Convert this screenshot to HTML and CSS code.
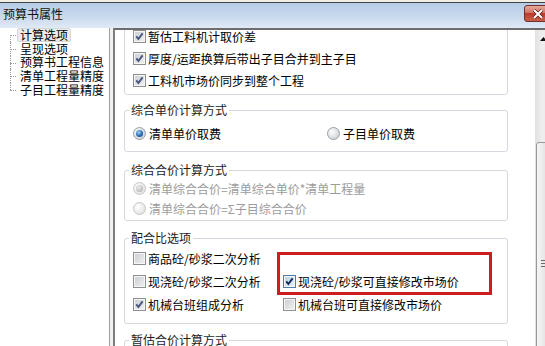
FILE: index.html
```html
<!DOCTYPE html>
<html lang="zh-CN">
<head>
    <meta charset="UTF-8">
    <title>预算书属性</title>
    <link rel="stylesheet" href="styles.css">
</head>
<body>
<div class="window">
    <div class="topstrip"></div>
    <div class="titlebar">
        <span class="title">预算书属性</span>
        <span class="close-btn">
            <svg width="12" height="10" viewBox="0 0 12 10"><path d="M2 1 L10 9 M10 1 L2 9" stroke="#5a1e18" stroke-width="3.4"/><path d="M2 1 L10 9 M10 1 L2 9" stroke="#fff" stroke-width="2"/></svg>
        </span>
    </div>

    <div class="main">
        <ul class="tree">
            <li class="first"><span class="label selected">计算选项</span></li>
            <li><span class="label">呈现选项</span></li>
            <li><span class="label">预算书工程信息</span></li>
            <li><span class="label">清单工程量精度</span></li>
            <li class="last"><span class="label">子目工程量精度</span></li>
        </ul>
        <div class="splitter"></div>

        <div class="content">
            <div class="pane">
                <!-- scrolled: top of this group is out of view -->
                <fieldset class="group g-top">
                    <div class="opt"><span class="cb"><svg viewBox="0 0 11 11"><path d="M2.3 5.4 L4.4 8 L8.6 2.4"/></svg></span>暂估工料机计取价差</div>
                    <div class="opt"><span class="cb"><svg viewBox="0 0 11 11"><path d="M2.3 5.4 L4.4 8 L8.6 2.4"/></svg></span>厚度/运距换算后带出子目合并到主子目</div>
                    <div class="opt"><span class="cb"><svg viewBox="0 0 11 11"><path d="M2.3 5.4 L4.4 8 L8.6 2.4"/></svg></span>工料机市场价同步到整个工程</div>
                </fieldset>

                <fieldset class="group g-unit">
                    <legend>综合单价计算方式</legend>
                    <div class="grid2">
                        <div class="opt"><span class="rb on"></span>清单单价取费</div>
                        <div class="opt"><span class="rb"></span>子目单价取费</div>
                    </div>
                </fieldset>

                <fieldset class="group g-total">
                    <legend>综合合价计算方式</legend>
                    <div class="opt"><span class="rb dis on"></span>清单综合合价=清单综合单价*清单工程量</div>
                    <div class="opt"><span class="rb dis"></span>清单综合合价=Σ子目综合合价</div>
                </fieldset>

                <fieldset class="group g-mix">
                    <legend>配合比选项</legend>
                    <div class="mix-grid">
                        <div class="opt"><span class="cb"></span>商品砼/砂浆二次分析</div>
                        <div class="opt"></div>
                        <div class="opt"><span class="cb"></span>现浇砼/砂浆二次分析</div>
                        <div class="opt"><span class="cb focus"><svg viewBox="0 0 11 11"><path d="M2.3 5.4 L4.4 8 L8.6 2.4"/></svg></span>现浇砼/砂浆可直接修改市场价</div>
                        <div class="opt"><span class="cb"><svg viewBox="0 0 11 11"><path d="M2.3 5.4 L4.4 8 L8.6 2.4"/></svg></span>机械台班组成分析</div>
                        <div class="opt"><span class="cb"></span>机械台班可直接修改市场价</div>
                        <div class="mark"></div>
                    </div>
                </fieldset>

                <fieldset class="group g-temp">
                    <legend>暂估合价计算方式</legend>
                </fieldset>
            </div>

            <div class="scrollbar">
                <div class="sb-up"><svg width="7" height="4" viewBox="0 0 7 4"><path d="M0 4 L3.5 0 L7 4 Z" fill="#111"/></svg></div>
                <div class="sb-track"></div>
                <div class="sb-thumb"><svg width="7" height="7" viewBox="0 0 7 7"><path d="M0 0.5 H7 M0 3.5 H7 M0 6.5 H7" stroke="#6a6a6a"/></svg></div>
            </div>
        </div>
    </div>
</div>
</body>
</html>
```

FILE: styles.css
```css
body {
    margin: 0;
    width: 545px;
    height: 346px;
    overflow: hidden;
    background: #f0f0f0;
    font-family: "Noto Sans CJK SC", "Noto Sans", sans-serif;
    font-size: 12px;
    color: #000;
}

.window {
    width: 552px;
    height: 346px;
    display: flex;
    flex-direction: column;
}

.topstrip {
    height: 2px;
    flex: none;
    background: #efede6;
    border-bottom: 1px solid #444;
}

.titlebar {
    height: 25px;
    flex: none;
    display: flex;
    justify-content: space-between;
    align-items: flex-start;
    padding-left: 3px;
    box-sizing: border-box;
    background: linear-gradient(#b5cce7, #cbdbee 60%, #e1eaf6);
}

.title {
    line-height: 14px;
    padding-top: 4px;
    color: #111;
}

.close-btn {
    width: 27px;
    height: 17px;
    margin: 2px 1px 0 0;
    box-sizing: border-box;
    border: 1px solid #70302a;
    border-radius: 3px;
    background: linear-gradient(#e6a99b, #d27466 45%, #bb3a2c 50%, #c9604a);
    display: flex;
    align-items: center;
    justify-content: center;
}

.main {
    flex: 1;
    display: flex;
    min-height: 0;
}

/* left tree */
.tree {
    width: 109px;
    margin: 0;
    padding: 0;
    list-style: none;
    background: #fff;
    border-right: 1px solid #a0a0a0;
}

.tree li {
    position: relative;
    height: 13.75px;
    display: flex;
    align-items: center;
    padding-left: 17px;
}

.tree li::before {
    content: "";
    position: absolute;
    left: 10px;
    top: 7px;
    width: 6px;
    border-top: 1px dotted #9a9a9a;
}

.tree li::after {
    content: "";
    position: absolute;
    left: 10px;
    top: 0;
    bottom: 0;
    border-left: 1px dotted #9a9a9a;
}

.tree li.first::after {
    top: 7px;
}

.tree li.last::after {
    bottom: auto;
    height: 7px;
}

.label {
    display: inline-block;
    line-height: 12px;
    padding: 0 2px;
    border: 1px solid transparent;
    white-space: nowrap;
}

.label.selected {
    background: #ececec;
    border-color: #d6d6d6;
    border-radius: 2px;
}

.splitter {
    width: 3px;
    flex: none;
    background: #f0f0f0;
}

/* right side */
.content {
    flex: 1;
    min-width: 0;
    display: flex;
    background: #fff;
    border-top: 2px solid #6d6d6d;
    border-left: 2px solid #7e7e7e;
}

.pane {
    flex: 1;
    overflow: hidden;
    padding-left: 9px;
}

.group {
    width: 384px;
    min-width: 0;
    box-sizing: border-box;
    margin: 0;
    padding: 0 8px 7px;
    border: 1px solid #d3d9de;
    border-radius: 3px;
}

.group legend {
    padding: 0 2px;
    margin-left: -4px;
    line-height: 14px;
    color: #1c1c1c;
}

.g-top {
    margin-top: -6px;
    padding-bottom: 3px;
}

.g-unit {
    margin-top: 8px;
    padding: 5px 8px 7px;
}

.g-total {
    margin-top: 11px;
    padding: 1px 8px 2px;
}

.g-mix {
    margin-top: 10px;
    padding: 2px 8px 7px;
}

.g-temp {
    margin-top: 9px;
    height: 40px;
}

.opt {
    display: flex;
    align-items: center;
    gap: 2px;
    height: 22px;
    white-space: nowrap;
}

.g-total .opt {
    height: 20px;
    color: #9c9c9c;
}

.g-mix .opt {
    height: 23px;
}

.grid2 {
    display: grid;
    grid-template-columns: 194px auto;
}

.mix-grid {
    position: relative;
    display: grid;
    grid-template-columns: 150px auto;
}

.mark {
    position: absolute;
    left: 144px;
    top: 5px;
    width: 215px;
    height: 43px;
    box-sizing: border-box;
    border: 3px solid #cc1d23;
}

/* checkbox */
.cb {
    width: 13px;
    height: 13px;
    flex: none;
    box-sizing: border-box;
    border: 1px solid #8e8f8f;
    background: linear-gradient(135deg, #c8ccd1, #f2f2f2);
    box-shadow: inset 0 0 0 1px #f6f6f6;
    display: flex;
}

.cb svg {
    width: 11px;
    height: 11px;
}

.cb path {
    fill: none;
    stroke: #46557c;
    stroke-width: 1.9;
}

.cb.focus {
    border-color: #4b7eae;
    background: linear-gradient(135deg, #b7cfe6, #eef4fa);
}

.cb.focus path {
    stroke: #14275e;
}

/* radio */
.rb {
    width: 13px;
    height: 13px;
    flex: none;
    box-sizing: border-box;
    border-radius: 50%;
    border: 1px solid #98a0a8;
    background: radial-gradient(circle at 35% 35%, #fdfdfd, #cfd3d7 80%);
    display: flex;
    align-items: center;
    justify-content: center;
    margin-right: 1px;
}

.rb.on::after {
    content: "";
    width: 7px;
    height: 7px;
    border-radius: 50%;
    background: radial-gradient(circle at 40% 35%, #9fd2f6, #2162aa 60%, #163c74);
}

.rb.dis {
    border-color: #c6c6c6;
    background: radial-gradient(circle at 35% 35%, #fff, #e2e2e2 80%);
}

.rb.dis.on::after {
    background: radial-gradient(circle at 40% 35%, #ececec, #a9a9a9);
}

/* scrollbar */
.scrollbar {
    width: 17px;
    flex: none;
    overflow: hidden;
    display: flex;
    flex-direction: column;
    background: linear-gradient(90deg, #e1e1e1, #eeeeee 40%, #ebebeb);
}

.sb-up {
    height: 17px;
    flex: none;
    display: flex;
    align-items: center;
    justify-content: center;
}

.sb-track {
    height: 95px;
    flex: none;
}

.sb-thumb {
    height: 242px;
    flex: none;
    box-sizing: border-box;
    margin-left: 1px;
    border: 1px solid #979797;
    border-radius: 3px;
    background: linear-gradient(90deg, #f5f5f5, #e8e8e8 50%, #d8d8d8);
    display: flex;
    align-items: center;
    justify-content: center;
}
```
